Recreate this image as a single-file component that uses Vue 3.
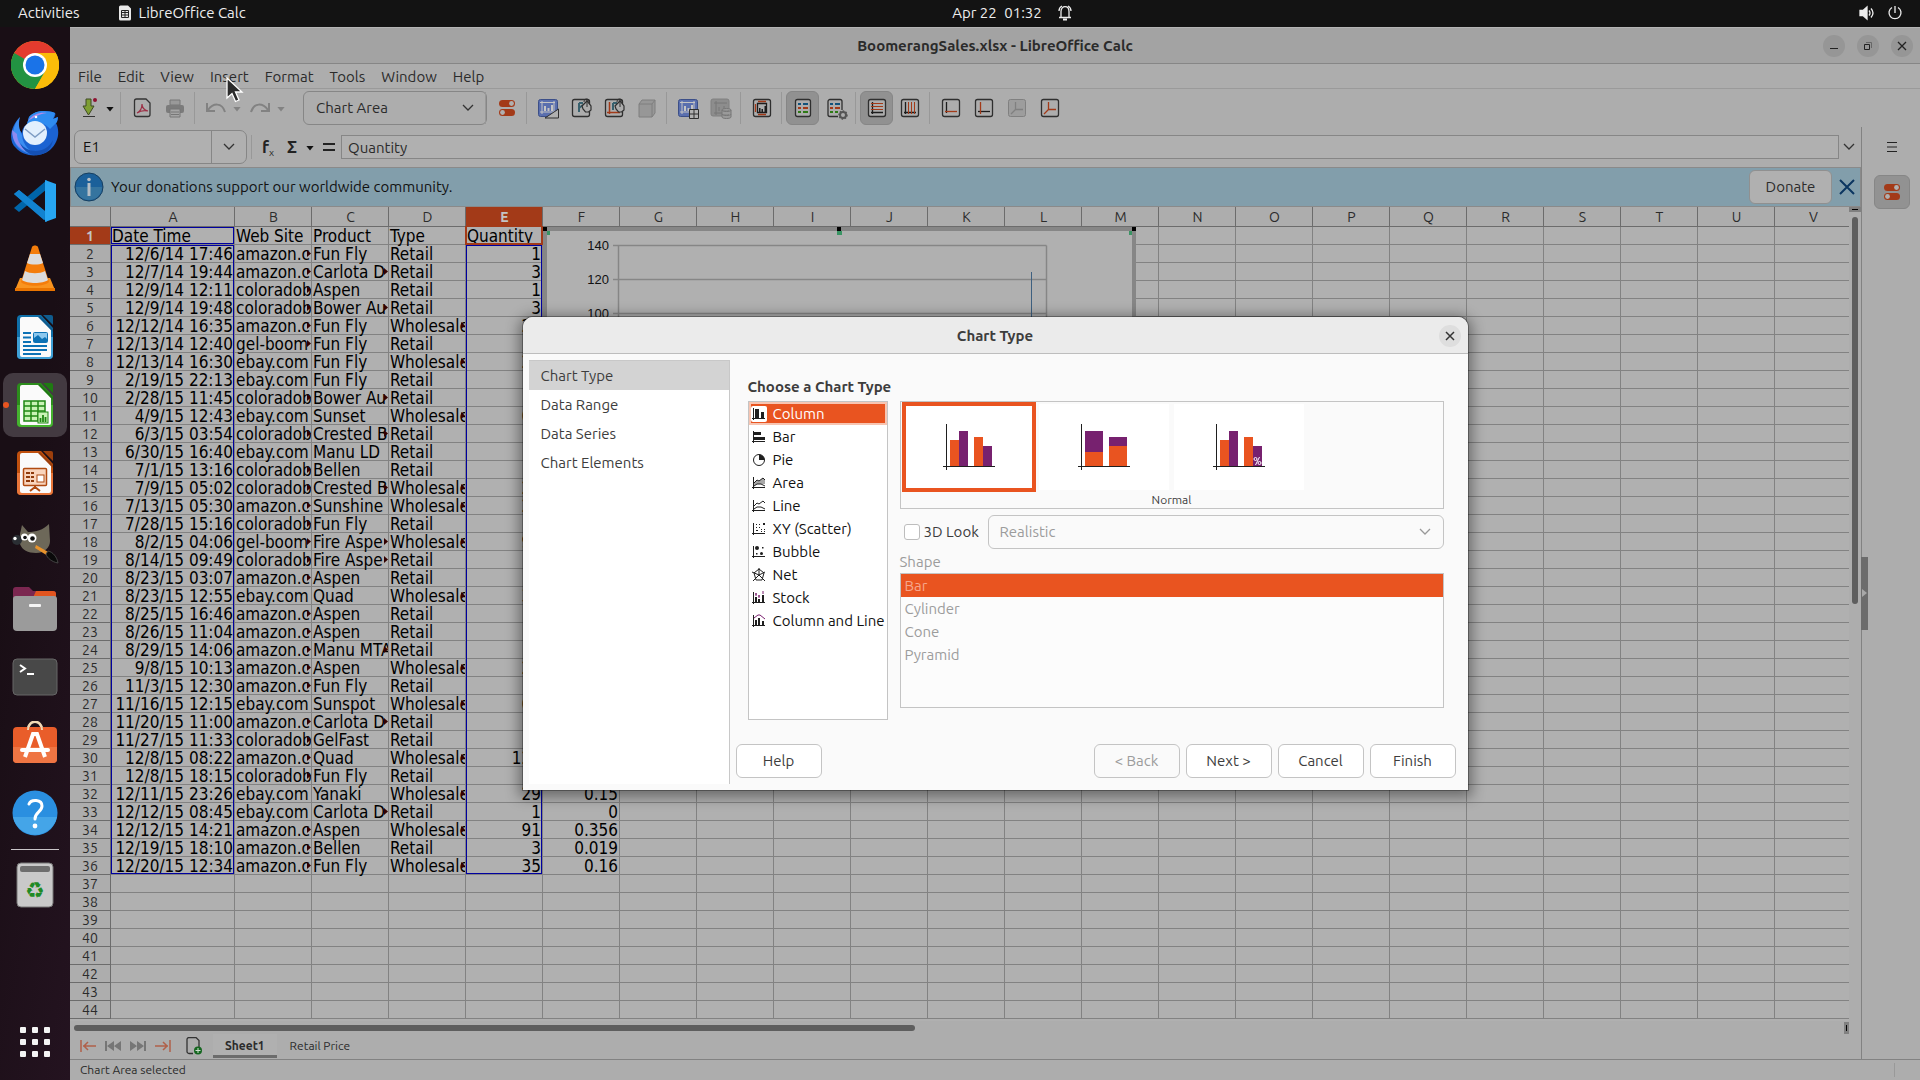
<script setup>
const columns = 'ABCDEFGHIJKLMNOPQRSTUV'.split('')

const records = [
  ['12/6/14 17:46', 'amazon.c', 'Fun Fly', 'Retail', '1', ''],
  ['12/7/14 19:44', 'amazon.c', 'Carlota D', 'Retail', '3', ''],
  ['12/9/14 12:11', 'coloradob', 'Aspen', 'Retail', '1', ''],
  ['12/9/14 19:48', 'coloradob', 'Bower Au', 'Retail', '3', ''],
  ['12/12/14 16:35', 'amazon.c', 'Fun Fly', 'Wholesale', '23', ''],
  ['12/13/14 12:40', 'gel-boom', 'Fun Fly', 'Retail', '1', ''],
  ['12/13/14 16:30', 'ebay.com', 'Fun Fly', 'Wholesale', '22', ''],
  ['2/19/15 22:13', 'ebay.com', 'Fun Fly', 'Retail', '2', ''],
  ['2/28/15 11:45', 'coloradob', 'Bower Au', 'Retail', '1', ''],
  ['4/9/15 12:43', 'ebay.com', 'Sunset', 'Wholesale', '60', ''],
  ['6/3/15 03:54', 'coloradob', 'Crested B', 'Retail', '1', ''],
  ['6/30/15 16:40', 'ebay.com', 'Manu LD', 'Retail', '2', ''],
  ['7/1/15 13:16', 'coloradob', 'Bellen', 'Retail', '1', ''],
  ['7/9/15 05:02', 'coloradob', 'Crested B', 'Wholesale', '21', ''],
  ['7/13/15 05:30', 'amazon.c', 'Sunshine', 'Wholesale', '25', ''],
  ['7/28/15 15:16', 'coloradob', 'Fun Fly', 'Retail', '2', ''],
  ['8/2/15 04:06', 'gel-boom', 'Fire Aspe', 'Wholesale', '92', ''],
  ['8/14/15 09:49', 'coloradob', 'Fire Aspe', 'Retail', '1', ''],
  ['8/23/15 03:07', 'amazon.c', 'Aspen', 'Retail', '1', ''],
  ['8/23/15 12:55', 'ebay.com', 'Quad', 'Wholesale', '31', ''],
  ['8/25/15 16:46', 'amazon.c', 'Aspen', 'Retail', '2', ''],
  ['8/26/15 11:04', 'amazon.c', 'Aspen', 'Retail', '1', ''],
  ['8/29/15 14:06', 'amazon.c', 'Manu MTA', 'Retail', '1', ''],
  ['9/8/15 10:13', 'amazon.c', 'Aspen', 'Wholesale', '20', ''],
  ['11/3/15 12:30', 'amazon.c', 'Fun Fly', 'Retail', '2', ''],
  ['11/16/15 12:15', 'ebay.com', 'Sunspot', 'Wholesale', '63', ''],
  ['11/20/15 11:00', 'amazon.c', 'Carlota D', 'Retail', '1', ''],
  ['11/27/15 11:33', 'coloradob', 'GelFast', 'Retail', '3', ''],
  ['12/8/15 08:22', 'amazon.c', 'Quad', 'Wholesale', '124', ''],
  ['12/8/15 18:15', 'coloradob', 'Fun Fly', 'Retail', '1', ''],
  ['12/11/15 23:26', 'ebay.com', 'Yanaki', 'Wholesale', '29', '0.15'],
  ['12/12/15 08:45', 'ebay.com', 'Carlota D', 'Retail', '1', '0'],
  ['12/12/15 14:21', 'amazon.c', 'Aspen', 'Wholesale', '91', '0.356'],
  ['12/19/15 18:10', 'amazon.c', 'Bellen', 'Retail', '3', '0.019'],
  ['12/20/15 12:34', 'amazon.c', 'Fun Fly', 'Wholesale', '35', '0.16'],
]
const clipped = ['amazon.c', 'coloradob', 'gel-boom', 'Carlota D', 'Bower Au', 'Crested B', 'Fire Aspe', 'Manu MTA', 'Wholesale']
const numeric = [0, 4, 5]
const rows = [['Date Time', 'Web Site', 'Product', 'Type', 'Quantity', ''], ...records]
while (rows.length < 44) rows.push([])

const menus = ['File', 'Edit', 'View', 'Insert', 'Format', 'Tools', 'Window', 'Help']

const frame = '<rect x="3.500" y="3.500" width="17" height="17" rx="2" fill="none" stroke="#2f2f2f" stroke-width="1.300"/>'
const bucket = '<path d="M13 10l5-5 4 5v4l-2.500 2h-3L14 13z" fill="#adadad" stroke="#2f2f2f" stroke-width="1.200"/><path d="M18 3v8M15 6c0-4 5-4 5 0" fill="none" stroke="#2f2f2f"/>'
const miniChart = '<path d="M6 5v13M4 16h15M4 6.500h15M18 5v13" stroke="#c4c4c4" fill="none"/><path d="M8 10h2v5H8zM11.500 12h2v3h-2zM15 9h2v6h-2z" fill="#c4c4c4"/>'
const icons = {
  toggles: '<rect x="4" y="4" width="16" height="7" rx="3.500" fill="#a33a18"/><circle cx="16.500" cy="7.500" r="2.400" fill="#b0b0b0"/><rect x="4" y="13" width="16" height="7" rx="3.500" fill="#a33a18"/><circle cx="7.500" cy="16.500" r="2.400" fill="#b0b0b0"/>',
  chartType: '<rect x="2.500" y="3.500" width="19" height="17" rx="2" fill="#5a6fae" stroke="#3c4f88"/>' + miniChart + '<path d="M9 22l13.500-9v9z" fill="#b0b0b0" stroke="#2f2f2f"/>',
  chartArea: frame + '<path d="M10 7v9M10 7h4M10 12l4-3" stroke="#38616e" stroke-width="2" fill="none"/>' + bucket,
  chartWall: frame + '<path d="M7.500 6v12M5 16.500h13" stroke="#a33a18" stroke-width="1.500" fill="none"/><path d="M11 7v7M11 7h4" stroke="#38616e" stroke-width="2" fill="none"/>' + bucket,
  cube: '<path d="M4 8l3-4h13v13l-3 4H4z" fill="#979797" stroke="#7f7f7f"/><path d="M4 8h13v13M17 8l3-4" fill="none" stroke="#7f7f7f"/>',
  dataTable: '<rect x="2.500" y="3.500" width="19" height="17" rx="2" fill="#5a6fae" stroke="#3c4f88"/>' + miniChart + '<path d="M13.500 13.500h9v9h-9zM18 13.500v9M13.500 18h9" fill="#b0b0b0" stroke="#2f2f2f"/>',
  dataRange: '<rect x="2" y="3" width="18" height="17" rx="2" fill="#8d8d8d" stroke="#808080"/><path d="M7 5v14M5 17h9M5 7h13M10 11v4M15 10v3" stroke="#777" fill="none"/><path d="M13 14c0-2 9-2 9 0v7c0 2-9 2-9 0zM13 14c0 2 9 2 9 0M13 18c0 2 9 2 9 0" fill="#9a9a9a" stroke="#777"/>',
  titles: frame + '<path d="M8 5.500h8M8 18.500h8M5.500 8v8" stroke="#a33a18" stroke-width="1.300"/><path d="M7.500 7.500h9v9h-9z" fill="none" stroke="#1d1d1d" stroke-width="1.300"/><path d="M9 12h1.500v4H9zM11.500 13H13v3h-1.500zM14.500 10h1.500v6h-1.500z" fill="#1d1d1d"/>',
  legend: '<rect x="4.500" y="3.500" width="15" height="17" rx="2" fill="#adadad" stroke="#2f2f2f" stroke-width="1.300"/><g stroke-width="2"><path d="M7 8h3M12 8h5" stroke="#11527c"/><path d="M7 12h3M12 12h5" stroke="#a33a18"/><path d="M7 16h3M12 16h5" stroke="#2f7a16"/></g>',
  legendGear: '<path d="M14 20.500H6a2 2 0 0 1-2-2v-13a2 2 0 0 1 2-2h10a2 2 0 0 1 2 2V14" fill="none" stroke="#2f2f2f" stroke-width="1.300"/><g stroke-width="2"><path d="M6 8h3M11 8h5" stroke="#11527c"/><path d="M6 12h3M11 12h5" stroke="#a33a18"/><path d="M6 16h3M11 16h3" stroke="#2f7a16"/></g><circle cx="19" cy="19" r="3" fill="#adadad" stroke="#555" stroke-width="2"/><circle cx="19" cy="19" r="4" fill="none" stroke="#555" stroke-width="1.500" stroke-dasharray="1.500 1.500"/>',
  gridH: '<rect x="4" y="4" width="16" height="16" rx="2" fill="#adadad"/>' + frame + '<path d="M7.500 6v12M6 16.500h12" stroke="#1d1d1d" stroke-width="1.300"/><path d="M6 7.500h12M6 10.500h12M6 13.500h12" stroke="#a33a18"/>',
  gridV: frame + '<path d="M7.500 6v12M6 16.500h12" stroke="#1d1d1d" stroke-width="1.300"/><path d="M10.500 6v12M13.500 6v12M16.500 6v12" stroke="#a33a18"/>',
  axisX: frame + '<path d="M7.500 6v11" stroke="#1d1d1d" stroke-width="1.300"/><path d="M6 15.500h12" stroke="#a33a18" stroke-width="1.300"/>',
  axisY: frame + '<path d="M6 15.500h12" stroke="#1d1d1d" stroke-width="1.300"/><path d="M8.500 6v12" stroke="#a33a18" stroke-width="1.300"/>',
  axisZ: '<rect x="3.500" y="3.500" width="17" height="17" rx="2" fill="#9d9d9d" stroke="#808080"/><path d="M10.500 6v7.500H18M10.500 13.500L6 18" fill="none" stroke="#808080" stroke-width="1.300"/>',
  axisAll: frame + '<path d="M10.500 6v7.500H18M10.500 13.500L6 18" fill="none" stroke="#a33a18" stroke-width="1.300"/>',
}
const chartTools = [
  { id: 'chartType', label: 'Chart Type' }, { id: 'chartArea', label: 'Chart Area' }, { id: 'chartWall', label: 'Chart Wall' }, { id: 'cube', label: '3D View' }, null,
  { id: 'dataTable', label: 'Data Table' }, { id: 'dataRange', label: 'Data Ranges' }, null,
  { id: 'titles', label: 'Titles' }, null,
  { id: 'legend', label: 'Legend On/Off', on: true }, { id: 'legendGear', label: 'Legend' }, null,
  { id: 'gridH', label: 'Horizontal Grids', on: true }, { id: 'gridV', label: 'Vertical Grids' }, null,
  { id: 'axisX', label: 'X Axis' }, { id: 'axisY', label: 'Y Axis' }, { id: 'axisZ', label: 'Z Axis' }, { id: 'axisAll', label: 'All Axes' },
]

const officeDoc = (dark, mid, light, inner) =>
  `<path d="M10 2h20l12 13v27a4 4 0 0 1-4 4H10a4 4 0 0 1-4-4V6a4 4 0 0 1 4-4z" fill="${mid}"/><path d="M6 24h36v18a4 4 0 0 1-4 4H10a4 4 0 0 1-4-4z" fill="${light}"/><path d="M11 4h17l12 13v25a2 2 0 0 1-2 2H11a2 2 0 0 1-2-2V6a2 2 0 0 1 2-2z" fill="#fafafa"/><path d="M32 2h8a2 2 0 0 1 2 2v8z" fill="${dark}"/><path d="M29 3l13 13v3L27 4z" fill="${dark}"/>${inner}`
const dock = [
  { label: 'Google Chrome', art: '<circle cx="24" cy="24" r="24" fill="#fbbc09"/><path d="M3.200 12A24 24 0 0 1 44.800 12H24L13.600 30z" fill="#e33b2e"/><path d="M3.200 12A24 24 0 0 0 24 48L34.400 30 24 24z" fill="#229342"/><path d="M44.800 12A24 24 0 0 1 24 48L34.400 30 34 12z" fill="#fbbc09"/><circle cx="24" cy="24" r="12" fill="#fff"/><circle cx="24" cy="24" r="9.500" fill="#1a73e8"/>' },
  { label: 'Thunderbird', art: '<path d="M9 8C-1 18-3 32 5 39c8 9 24 10 34 2 9-8 10-19 6-27 2-3 2-5 2-6l-5 2c2-2 3-5 2-6C36 1 24 1 18 8l-2 7c-4 3-5 6-5 9-4-4-5-10-2-16z" fill="#1b63d2"/><path d="M44 4C36 1 24 1 18 8l-2 7c9-4 18-1 23 5l7-7 1-5-5 2z" fill="#2f8cf0"/><path d="M9 8C2 16 0 26 4 34c5 9 14 12 24 11-9-2-16-8-17-19-3-6-4-11-2-18z" fill="#3b8df2"/><path d="M1 21c0 11 6 19 16 22C10 38 6 32 6 25z" fill="#8e8af0"/><path d="M9 34c8 11 26 11 33-3-2 12-11 16-19 15-6-1-11-5-14-12z" fill="#1450b4"/><circle cx="24" cy="24" r="12" fill="#e2effd"/><path d="M14 20l10 8 10-8" fill="none" stroke="#7f9dc4" stroke-width="1.500"/><path d="M17 12c5-7 12-9 19-8-9 1-14 5-19 8z" fill="#b48ae8"/><circle cx="25" cy="8" r="1.300" fill="#fff"/>' },
  { label: 'Visual Studio Code', art: '<path d="M3 17l5-4 28 23v9z" fill="#0b7dc6"/><path d="M3 31l5 4L36 12V3z" fill="#0065a9"/><path d="M3 17l5-4 26 21-1 9z" fill="#1283d0"/><path d="M34 3l11 4v34l-11 4z" fill="#27a6f2"/>' },
  { label: 'VLC', art: '<path d="M9 33h30l5 12H4z" fill="#f9941f"/><path d="M4 43h40v3H4z" fill="#e97400"/><path d="M21 2c1-2 5-2 6 0l11 35c-5 5-23 5-28 0z" fill="#f47d0b"/><path d="M19 9h10l3 9c-4 2-12 2-16 0zM14 26c5 3 15 3 20 0l3 9c-5 4-21 4-26 0z" fill="#dcdcdc"/>' },
  { label: 'LibreOffice Writer', art: officeDoc('#0f5c8e', '#0f6fa8', '#3fa0d6', '<path d="M12 20h8M12 24.500h8M12 29h8M12 33h24M12 37h24M12 41h18" stroke="#0d72b5" stroke-width="2"/><rect x="22.500" y="19.500" width="14" height="10" rx="1" fill="#8cc8ee" stroke="#0d72b5"/><path d="M23 29v-4l4-3 4 4 3-2 2 2v3z" fill="#0d72b5"/>') },
  { label: 'LibreOffice Calc', active: true, art: officeDoc('#1f7a12', '#2c8c1c', '#45b32f', '<path d="M13 20h21v20H13zM13 25h21M13 30h21M13 35h21M20 20v20M27 20v20" fill="#c9f3b6" stroke="#1f8614" stroke-width="1.500"/><rect x="27" y="31" width="10" height="11" fill="#c9f3b6" stroke="#1f8614"/><path d="M29.500 41v-4M32 41v-7M34.500 41v-5" stroke="#1f8614" stroke-width="1.800"/>') },
  { label: 'LibreOffice Impress', art: officeDoc('#9c3f0c', '#c0500e', '#e8763a', '<rect x="12.500" y="19.500" width="23" height="17" rx="1" fill="#f9d5bd" stroke="#b04a10" stroke-width="1.500"/><path d="M15 24h4M15 28h4M15 32h4" stroke="#8e3a0b" stroke-width="2"/><path d="M20 24h3M20 28h3M20 32h3" stroke="#8e3a0b" stroke-width="2"/><rect x="26" y="26" width="7" height="7" fill="#fff" stroke="#b04a10"/><path d="M24 37v2M24 38l-5 4M24 38l5 4" stroke="#b04a10" stroke-width="2"/>') },
  { label: 'GIMP', art: '<path d="M9 17l2-9 6 7c8 0 15-2 21-8l1 17c0 6-5 12-14 12-8 0-14-3-16-9z" fill="#6d6859"/><circle cx="6" cy="23" r="5" fill="#2a2e33"/><circle cx="4" cy="21.500" r="1.700" fill="#fff"/><circle cx="13.500" cy="20" r="3.500" fill="#fff"/><circle cx="21" cy="21" r="4.500" fill="#fff"/><circle cx="14" cy="20.500" r="1.800" fill="#111"/><circle cx="21.500" cy="21.500" r="2.300" fill="#111"/><path d="M25 28l14 8-2 3-13-8z" fill="#e8932c"/><path d="M37 34c5 1 9 6 10 12-6-1-11-5-12-9z" fill="#0a0a0a" stroke="#444"/>' },
  { label: 'Files', art: '<path d="M2 10V5a3 3 0 0 1 3-3h13l4 4h20a3 3 0 0 1 3 3v8H2z" fill="#7b2750"/><path d="M25 6h17a3 3 0 0 1 3 3v8H20z" fill="#e2551f"/><path d="M2 14a3 3 0 0 1 3-3h38a3 3 0 0 1 3 3v28a4 4 0 0 1-4 4H6a4 4 0 0 1-4-4z" fill="#9b9b9b"/><rect x="18" y="19" width="12" height="3" rx="1" fill="#f4f4f4"/>' },
  { label: 'Terminal', art: '<rect x="2" y="6" width="44" height="36" rx="4" fill="#484848" stroke="#666"/><path d="M9 12l5 3.500-5 3.500M16 21h7" fill="none" stroke="#fff" stroke-width="2"/>' },
  { label: 'Ubuntu Software', art: '<path d="M17 9c0-11 14-11 14 0" fill="none" stroke="#f0d9b5" stroke-width="2.500"/><rect x="2" y="6" width="44" height="36" rx="4" fill="#e95d2a"/><path d="M2 26h44v12a4 4 0 0 1-4 4H6a4 4 0 0 1-4-4z" fill="#ef7543"/><path d="M17 9c0-3 1-5 2-6M31 9c0-3-1-5-2-6" fill="none" stroke="#f0d9b5" stroke-width="2"/><path d="M14 36l8-23h4l8 23" fill="none" stroke="#fff" stroke-width="4"/><path d="M11 29h26" stroke="#fff" stroke-width="4" stroke-linecap="round"/>' },
  { label: 'Help', art: '<circle cx="24" cy="24" r="22.500" fill="#2a8fe0"/><path d="M2 28a22.500 22.500 0 0 0 44 0z" fill="#44a5e8"/><path d="M18 15c2-5 13-5 13 2 0 6-7 6-7 13" fill="none" stroke="#fff" stroke-width="3" stroke-linecap="round"/><circle cx="24" cy="37" r="2.400" fill="#fff"/>' },
]

const typeIcons = {
  Column: '<path d="M2.500 2v12M1 12.500h13" stroke="#1f1f1f"/><path d="M4 3h4v9H4zM10 6h3v6h-3z" fill="#1f1f1f"/>',
  Bar: '<path d="M2.500 2v12M1 12.500h13" stroke="#1f1f1f"/><path d="M3 3h7v3H3zM3 8h11v3H3z" fill="#1f1f1f"/>',
  Pie: '<circle cx="8" cy="8" r="5.500" fill="none" stroke="#1f1f1f"/><path d="M8 8V2.500A5.500 5.500 0 0 1 13.500 8z" fill="#1f1f1f"/>',
  Area: '<path d="M3 8l3-3 2 1 4-3 2 2v4l-4 0H6l-3 2z" fill="#a8a8a8"/><path d="M2.500 2v12M1 12.500h13M3 8l3-3 2 1 4-3 2 2M3 11l3-2h4l4 2" stroke="#1f1f1f" fill="none"/>',
  Line: '<path d="M2.500 2v12M1 12.500h13M3 8l3-3 2 1 4-3 2 2M3 11l3-2h4l4 2" stroke="#1f1f1f" fill="none"/>',
  'XY (Scatter)': '<path d="M2.500 2v12M1 12.500h13" stroke="#1f1f1f"/><path d="M5 3h1v1H5zM8 3h1v1H8zM5 6h1v1H5zM12 2h2v2h-2zM8 6h1v1H8zM5 9h2v1H5zM10 8h1v1h-1zM13 8h1v1h-1zM10 10h1v1h-1zM13 10h1v1h-1z" fill="#1f1f1f"/>',
  Bubble: '<path d="M2.500 2v12M1 12.500h13" stroke="#1f1f1f"/><circle cx="6" cy="4" r="2" fill="#1f1f1f"/><circle cx="10.500" cy="9.500" r="1.500" fill="#1f1f1f"/><path d="M11 3h1.500v1.500H11zM5 9h1.500v1.500H5z" fill="#1f1f1f"/>',
  Net: '<path d="M8 1v7l-6 6M8 8l6 6M1 5l7 3 6-3M8 2l5 4-2 7H5L3 6z" stroke="#1f1f1f" fill="none"/>',
  Stock: '<path d="M2.500 2v12M1 12.500h13" stroke="#1f1f1f"/><path d="M4 7h2v5H4zM7 9h2v3H7zM11 5h2v7h-2z" fill="#1f1f1f"/><path d="M5 3v3M8 5v3M12 1v3M4 4h2M7 6h2" stroke="#7a1f6e"/>',
  'Column and Line': '<path d="M2.500 2v12M1 12.500h13" stroke="#1f1f1f"/><path d="M4 7h2v5H4zM7 5h2v7H7zM11 8h2v4h-2z" fill="#1f1f1f"/><path d="M3 5l4-3h2l5 4" stroke="#7a1f6e" fill="none"/>',
}
const chartTypes = Object.keys(typeIcons)
const axes = '<path d="M3.500 0v46M0 42.500h52" stroke="#1f1f1f"/>'
const variants = [
  { label: 'Normal', art: '<path d="M7 16h9v26H7zM31 13h9v29h-9z" fill="#e95420"/><path d="M16 7h9v35h-9zM40 22h9v20h-9z" fill="#77216f"/>' + axes },
  { label: 'Stacked', art: '<path d="M7 28h18v14H7zM31 22h18v20H31z" fill="#e95420"/><path d="M7 7h18v21H7zM31 13h18v9H31z" fill="#77216f"/>' + axes },
  { label: 'Percent Stacked', art: '<path d="M7 16h9v26H7zM31 13h9v29h-9z" fill="#e95420"/><path d="M16 7h9v35h-9zM40 22h9v20h-9z" fill="#77216f"/><g fill="none" stroke="#fff"><circle cx="42.500" cy="35" r="1.500"/><circle cx="46.500" cy="39" r="1.500"/><path d="M46.500 33l-4 8"/></g>' + axes },
]
const shapes = ['Bar', 'Cylinder', 'Cone', 'Pyramid']
</script>

<template>
  <div class="desktop">
    <header class="topbar">
      <div class="topbar-left">
        <button class="plain">Activities</button>
        <button class="plain app-name">
          <svg width="14" height="16" viewBox="0 0 14 16"><path d="M1 2a1.500 1.500 0 0 1 1.500-1.500H10l3 3V14a1.500 1.500 0 0 1-1.500 1.500h-9A1.500 1.500 0 0 1 1 14z" fill="#e8e8e8" /><path d="M3.500 5.500h7v7h-7zM3.500 7.500h7M3.500 10h7M7 5.500v7" stroke="#222" fill="none" /></svg>
          LibreOffice Calc
        </button>
      </div>
      <div class="topbar-center">
        <span>Apr 22&ensp;01:32</span>
        <svg width="14" height="16" viewBox="0 0 14 16" fill="none" stroke="#eee" stroke-width="1.300"><path d="M1 12.500h12M3 12V6.500C3 0 11 0 11 6.500V12M1 6c0-2 1-4 3-5M13 6c0-2-1-4-3-5" /><path d="M5 14.500h4" stroke-width="2" /></svg>
      </div>
      <div class="topbar-right">
        <svg width="16" height="16" viewBox="0 0 16 16" fill="none" stroke="#eee" stroke-width="1.300"><path d="M1 5.500h3L8 2v12L4 10.500H1z" fill="#eee" /><path d="M10 5.500q2 2.500 0 5M12 3.500q4 4.500 0 9" /></svg>
        <svg width="16" height="16" viewBox="0 0 16 16" fill="none" stroke="#eee" stroke-width="1.300"><path d="M8 1v7M5 2.500a6 6 0 1 0 6 0" /></svg>
      </div>
    </header>

    <div class="body">
      <nav class="dock">
        <button v-for="d in dock" :key="d.label" class="dock-item" :class="{ active: d.active }" :aria-label="d.label">
          <svg width="48" height="48" viewBox="0 0 48 48" v-html="d.art" />
        </button>
        <hr />
        <button class="dock-item" aria-label="Trash">
          <svg width="48" height="48" viewBox="0 0 48 48"><rect x="6" y="1" width="36" height="44" rx="4" fill="#c9c9c9" stroke="#777" /><rect x="9" y="4" width="30" height="6" rx="2" fill="#6e6e6e" /><text class="recycle" x="24" y="36" text-anchor="middle" fill="#1f8a24">♻</text></svg>
        </button>
        <button class="dock-item apps" aria-label="Show Applications">
          <svg width="32" height="32" viewBox="0 0 32 32" fill="#f4f4f4"><template v-for="y in 3" :key="y"><rect v-for="x in 3" :key="x" :x="x * 12 - 11" :y="y * 12 - 11" width="6" height="6" rx="1" /></template></svg>
        </button>
      </nav>

      <main class="window">
        <div class="titlebar">
          <h1>BoomerangSales.xlsx - LibreOffice Calc</h1>
          <div class="window-buttons">
            <button aria-label="Minimize"><svg width="12" height="12" viewBox="0 0 12 12"><path d="M2 8.500h8" stroke="#222" /></svg></button>
            <button aria-label="Restore"><svg width="12" height="12" viewBox="0 0 12 12" fill="none"><path d="M4 2.500h5.500V8" stroke="#666" /><path d="M2.500 4.500h5v5h-5z" stroke="#222" /></svg></button>
            <button aria-label="Close"><svg width="12" height="12" viewBox="0 0 12 12"><path d="M2 2l8 8M10 2l-8 8" stroke="#222" stroke-width="1.300" /></svg></button>
          </div>
        </div>

        <nav class="menubar"><button v-for="m in menus" :key="m" class="plain">{{ m }}</button></nav>

        <div class="toolbar">
          <button class="tool save" aria-label="Save"><svg width="24" height="24" viewBox="0 0 24 24"><path d="M9 3h5v7h3l-5.500 9L6 10h3z" fill="#7f9f34" stroke="#3f4a22" /><path d="M6 20.500h12" stroke="#333" /><circle cx="18" cy="4" r="2" fill="#8e1030" /></svg></button>
          <span class="tri"></span><i class="sep"></i>
          <button class="tool" aria-label="Export as PDF"><svg width="24" height="24" viewBox="0 0 24 24" fill="none"><path d="M4.500 5a2 2 0 0 1 2-2H16l4 4v11.500a2 2 0 0 1-2 2H6.500a2 2 0 0 1-2-2z" stroke="#333" stroke-width="1.300" /><path d="M7 17c4-2 5-6 5-9 0 4 2 6 6 7-4-1-8 0-11 2z" stroke="#9c2f45" stroke-width="1.200" /></svg></button>
          <button class="tool" aria-label="Print"><svg width="24" height="24" viewBox="0 0 24 24"><path d="M7 4h10v5H7z" fill="#999" stroke="#777" /><rect x="3" y="9" width="18" height="8" rx="2" fill="#7b7b7b" /><path d="M7 13h10v8H7zM8 16h8M8 18.500h8" fill="#a5a5a5" stroke="#777" /></svg></button>
          <i class="sep"></i>
          <button class="tool" aria-label="Undo"><svg width="24" height="24" viewBox="0 0 24 24" fill="none" stroke="#828282" stroke-width="2"><path d="M3 7v8h8M4 14C9 7 18 6 21 16" /></svg></button>
          <span class="tri dim"></span>
          <button class="tool" aria-label="Redo"><svg width="24" height="24" viewBox="0 0 24 24" fill="none" stroke="#828282" stroke-width="2"><path d="M21 7v8h-8M20 14C15 7 6 6 3 16" /></svg></button>
          <span class="tri dim"></span>
          <select class="element-select" aria-label="Chart element"><option>Chart Area</option></select>
          <i class="sep"></i>
          <button class="tool" aria-label="Format Selection"><svg width="24" height="24" viewBox="0 0 24 24" v-html="icons.toggles" /></button>
          <i class="sep"></i>
          <template v-for="(t, i) in chartTools" :key="i">
            <button v-if="t" class="tool" :class="{ on: t.on }" :aria-label="t.label"><svg width="24" height="24" viewBox="0 0 24 24" v-html="icons[t.id]" /></button>
            <i v-else class="sep"></i>
          </template>
        </div>

        <div class="work">
          <div class="document">
            <div class="formula-bar">
              <div class="name-box"><input aria-label="Name Box" value="E1" /><button aria-label="Name list"><svg width="12" height="8" viewBox="0 0 12 8"><path d="M1 1l5 5 5-5" fill="none" stroke="#333" stroke-width="1.300" /></svg></button></div>
              <i class="sep"></i>
              <button class="fn" aria-label="Function Wizard"><b>f</b><sub>x</sub></button>
              <button class="fn" aria-label="Select Function"><b>Σ</b></button>
              <span class="tri"></span>
              <button class="fn" aria-label="Formula"><svg width="12" height="10" viewBox="0 0 12 10"><path d="M0 2h12M0 8h12" stroke="#222" stroke-width="2" /></svg></button>
              <input class="formula" aria-label="Formula input" value="Quantity" />
              <button class="fn expand" aria-label="Expand Formula Bar"><svg width="12" height="8" viewBox="0 0 12 8"><path d="M1 1l5 5 5-5" fill="none" stroke="#333" stroke-width="1.300" /></svg></button>
            </div>

            <div class="infobar">
              <svg width="30" height="30" viewBox="0 0 30 30"><circle cx="15" cy="15" r="14" fill="#1b609a" stroke="#173f60" /><path d="M2 15a13 13 0 0 0 26 0z" fill="#35749f" /><path d="M13.500 11h3v13h-3z" fill="#b5bec6" /><circle cx="15" cy="7.500" r="1.800" fill="#b5bec6" /></svg>
              <span>Your donations support our worldwide community.</span>
              <button class="donate">Donate</button>
              <button class="plain" aria-label="Close Infobar"><svg width="16" height="16" viewBox="0 0 16 16"><path d="M1 1l14 14M15 1L1 15" stroke="#0b3660" stroke-width="2" /></svg></button>
            </div>

            <div class="sheet-area">
              <div class="grid">
                <table>
                  <colgroup><col class="c-head" /><col class="c-date" /><col v-for="n in 21" :key="n" class="c-std" /></colgroup>
                  <thead><tr><th></th><th v-for="c in columns" :key="c" scope="col" :class="{ sel: c === 'E' }">{{ c }}</th></tr></thead>
                  <tbody>
                    <tr v-for="(r, i) in rows" :key="i">
                      <th scope="row" :class="{ sel: i === 0 }">{{ i + 1 }}</th>
                      <td v-for="(c, j) in columns" :key="c" :class="{ num: i > 0 && numeric.includes(j), cut: clipped.includes(r[j]) }">{{ r[j] }}</td>
                    </tr>
                  </tbody>
                </table>
                <div class="range date-title"></div>
                <div class="range date-values"></div>
                <div class="range qty-values"></div>
                <div class="cursor-cell"></div>
                <div class="chart">
                  <svg width="593" height="400" viewBox="0 0 593 400">
                    <rect x="2" y="2" width="589" height="396" fill="#b0b0b0" stroke="#868686" stroke-width="4" />
                    <path d="M70 18.500h433.500M70 52.500h433.500M70 86.500h433.500M75.500 18.500v300M503.500 18.500v300" fill="none" stroke="#868686" stroke-width="1.500" />
                    <path d="M488.500 45v300" stroke="#3e6080" />
                    <path d="M0 0h4v4H0zM294 0h4v4h-4zM589 0h4v4h-4z" fill="#000" />
                    <path d="M4 4h3v4H4zM294 4h5v4h-5zM586 4h3v4h-3z" fill="#3a9464" />
                    <g class="chart-label" text-anchor="end"><text x="66" y="23">140</text><text x="66" y="57">120</text><text x="66" y="91">100</text></g>
                  </svg>
                </div>
              </div>
              <div class="vscroll"><i class="split"></i><i class="thumb"></i></div>
            </div>

            <div class="hscroll"><i class="thumb"></i><i class="split"></i></div>

            <div class="tabs">
              <button class="tab-nav" aria-label="First sheet"><svg width="16" height="14" viewBox="0 0 16 14"><path d="M1 1v12M3 7h13M8 3L4 7l4 4" stroke="#b0604a" stroke-width="1.500" fill="none" /></svg></button>
              <button class="tab-nav" aria-label="Previous sheet"><svg width="16" height="14" viewBox="0 0 16 14" fill="#767676"><path d="M0 2h2v10H0zM9 2v10L2 7zM16 2v10L9 7z" /></svg></button>
              <button class="tab-nav" aria-label="Next sheet"><svg width="16" height="14" viewBox="0 0 16 14" fill="#767676"><path d="M14 2h2v10h-2zM0 2v10l7-5zM7 2v10l7-5z" /></svg></button>
              <button class="tab-nav" aria-label="Last sheet"><svg width="16" height="14" viewBox="0 0 16 14"><path d="M15 1v12M0 7h13M8 3l4 4-4 4" stroke="#b0604a" stroke-width="1.500" fill="none" /></svg></button>
              <button class="tab-nav add" aria-label="Add sheet"><svg width="16" height="18" viewBox="0 0 16 18"><path d="M7 16.500H3a2 2 0 0 1-2-2v-12a2 2 0 0 1 2-2h7l3 3V10" fill="none" stroke="#333" stroke-width="1.300" /><circle cx="12" cy="13.500" r="4" fill="#14661f" /><path d="M12 11v5M9.500 13.500h5" stroke="#cfe0cf" /></svg></button>
              <button class="tab current">Sheet1</button>
              <button class="tab">Retail Price</button>
            </div>
          </div>

          <aside class="sidebar">
            <button class="plain" aria-label="Sidebar Settings"><svg width="10" height="10" viewBox="0 0 10 10"><path d="M0 .5h10M0 5h10M0 9.500h10" stroke="#222" /></svg></button>
            <button class="deck" aria-label="Properties"><svg width="24" height="24" viewBox="0 0 24 24" v-html="icons.toggles" /></button>
            <div class="handle"></div>
          </aside>
        </div>

        <footer class="status"><span>Chart Area selected</span><i></i></footer>
      </main>
    </div>

    <svg class="pointer" width="18" height="26" viewBox="0 0 18 26"><path d="M1 1v20l5-4.500 3.500 8 3.500-1.500-3.500-8H16z" fill="#2b2b2b" stroke="#fff" stroke-width="1.300" /></svg>

    <div class="modal-layer">
      <section class="dialog" role="dialog" aria-labelledby="dialog-title">
        <header class="dialog-head">
          <h2 id="dialog-title">Chart Type</h2>
          <button aria-label="Close"><svg width="10" height="10" viewBox="0 0 10 10"><path d="M1 1l8 8M9 1L1 9" stroke="#333" stroke-width="1.500" /></svg></button>
        </header>
        <div class="dialog-body">
          <nav class="steps">
            <button v-for="(s, i) in ['Chart Type', 'Data Range', 'Data Series', 'Chart Elements']" :key="s" :class="{ current: i === 0 }">{{ s }}</button>
          </nav>
          <div class="page">
            <h3>Choose a Chart Type</h3>
            <div class="choices">
              <ul class="types">
                <li v-for="(t, i) in chartTypes" :key="t" :class="{ selected: i === 0 }">
                  <svg width="16" height="16" viewBox="0 0 16 16" v-html="typeIcons[t]" />{{ t }}
                </li>
              </ul>
              <div class="options">
                <div class="variants">
                  <div class="thumbs">
                    <button v-for="(v, i) in variants" :key="v.label" :aria-label="v.label" :class="{ selected: i === 0 }"><svg width="52" height="46" viewBox="0 0 52 46" v-html="v.art" /></button>
                  </div>
                  <p>Normal</p>
                </div>
                <div class="look">
                  <input id="look3d" type="checkbox" /><label for="look3d">3D Look</label>
                  <select disabled aria-label="Scheme"><option>Realistic</option></select>
                </div>
                <p class="shape-label">Shape</p>
                <ul class="shapes"><li v-for="(s, i) in shapes" :key="s" :class="{ selected: i === 0 }">{{ s }}</li></ul>
              </div>
            </div>
            <div class="actions">
              <button class="help">Help</button>
              <button disabled>&lt; Back</button>
              <button>Next &gt;</button>
              <button>Cancel</button>
              <button>Finish</button>
            </div>
          </div>
        </div>
      </section>
    </div>
  </div>
</template>

<style>
body { background: #adadad; overflow: hidden; }
</style>

<style scoped>
* { box-sizing: border-box; }
.desktop { position: relative; display: flex; flex-direction: column; min-height: 100vh; overflow: hidden; font-family: Ubuntu, "Noto Sans", sans-serif; font-size: 15px; line-height: 20px; color: #2b2b2b; }
button, input, select { font: inherit; color: inherit; margin: 0; }
button { padding: 0; border: 0; background: none; display: flex; align-items: center; justify-content: center; white-space: nowrap; }
svg { display: block; flex: none; }
h1, h2, h3, p, ul { margin: 0; padding: 0; font-size: inherit; list-style: none; }
.sep { flex: none; width: 1px; height: 32px; background: #989898; margin: 0 4px 0 3px; }

.topbar { display: grid; grid-template-columns: 1fr auto 1fr; align-items: center; height: 27px; padding: 0 17px 1px 18px; background: #131313; color: #eee; }
.topbar-left, .topbar-center, .topbar-right { display: flex; align-items: center; white-space: nowrap; }
.topbar-left { gap: 38px; }
.app-name { gap: 7px; }
.topbar-center { gap: 16px; padding-left: 103px; }
.topbar-right { justify-content: flex-end; gap: 12px; }

.body { display: flex; flex: 1; }
.dock { display: flex; flex-direction: column; align-items: center; gap: 4px; width: 70px; padding: 6px 3px; background: linear-gradient(100deg, #190e15 40%, #241320); }
.dock-item { width: 64px; height: 64px; border-radius: 10px; position: relative; }
.dock-item.active { background: #433a41; }
.dock-item.active::before { content: ""; position: absolute; left: 0; width: 6px; height: 6px; border-radius: 3px; background: #e95420; }
.dock hr { width: 48px; height: 1px; margin: 0; border: 0; background: #c9c5c8; }
.dock .apps { margin-top: auto; }
.recycle { font-family: "DejaVu Sans", sans-serif; font-size: 22px; }

.window { display: flex; flex-direction: column; flex: 1; min-width: 0; background: #adadad; }
.titlebar { position: relative; display: flex; align-items: center; justify-content: center; height: 37px; background: #a3a3a3; border-bottom: 1px solid #868686; border-top: 1px solid #b4b4b4; }
.titlebar h1 { font-weight: bold; }
.window-buttons { position: absolute; right: 7px; display: flex; gap: 12px; }
.window-buttons button { width: 22px; height: 22px; border-radius: 11px; background: #969696; }
.menubar { display: flex; gap: 16px; height: 25px; padding: 1px 8px 0; border-bottom: 1px solid #9a9a9a; }
.toolbar { display: flex; align-items: center; height: 38px; padding-left: 3px; }
.tool { width: 33px; height: 34px; border-radius: 6px; }
.tool.save { width: 32px; }
.tool.on { background: #919191; border: 1px solid #868686; }
.tri { flex: none; width: 8px; height: 5px; margin: 2px 3px 0 1px; background: #111; clip-path: polygon(0 0, 100% 0, 50% 100%); }
.tri.dim { background: #828282; margin-right: 2px; }
select { appearance: none; border-radius: 6px; background: no-repeat right 12px center url("data:image/svg+xml,%3Csvg xmlns='http://www.w3.org/2000/svg' width='12' height='8'%3E%3Cpath d='M1 1l5 5 5-5' fill='none' stroke='%23333' stroke-width='1.300'/%3E%3C/svg%3E"); }
.element-select { width: 184px; height: 34px; margin-left: 16px; margin-right: -5px; padding: 0 12px; border: 1px solid #868686; }

.work { display: flex; flex: 1; }
.document { display: flex; flex-direction: column; flex: 1; min-width: 0; }
.formula-bar { display: flex; align-items: center; height: 40px; padding-left: 4px; }
.name-box { display: flex; width: 173px; height: 34px; margin-right: 1px; border: 1px solid #868686; border-radius: 7px; background: #b0b0b0; }
.name-box input { flex: 1; min-width: 0; padding: 0 8px; border: 0; background: none; color: #111; }
.name-box button { width: 35px; border-left: 1px solid #868686; }
.formula-bar .sep { height: 24px; }
.fn { width: 24px; height: 24px; font-size: 17px; color: #222; }
.fn sub { font-size: 10px; align-self: flex-end; line-height: 12px; }
.formula-bar .tri { margin-left: 2px; }
.formula { flex: 1; height: 24px; padding: 0 6px; border: 1px solid #868686; background: #b0b0b0; }
.formula-bar .expand { width: 22px; padding-right: 3px; }
.infobar { display: flex; align-items: center; height: 40px; padding: 0 5px 0 3px; gap: 7px; border: 1px solid #8a8a8a; background: #829eab; color: #111; }
.donate { width: 83px; height: 34px; margin-left: auto; border: 1px solid #909090; border-radius: 6px; background: #b0b0b0; color: #2b2b2b; }

.sheet-area { display: flex; }
.grid { position: relative; flex: 1; min-width: 0; height: 814px; overflow: hidden; background: #b0b0b0; }
table { width: 1782px; table-layout: fixed; border-collapse: separate; border-spacing: 0; }
.c-head { width: 41px; } .c-date { width: 124px; } .c-std { width: 77px; }
th, td { height: 18px; padding: 0; white-space: nowrap; border-right: 1px solid #828282; border-bottom: 1px solid #828282; line-height: 17px; }
th { font-size: 14px; font-weight: normal; background: #adadad; border-color: #6c6c6c; }
tbody th { padding-top: 1px; line-height: 16px; }
thead th { height: 20px; padding: 1px 0 0 1px; line-height: 18px; }
th.sel { background: #a33a18; color: #c4c4c4; font-weight: bold; }
td { position: relative; padding: 1px 1px 0; overflow-x: clip; overflow-y: visible; font-family: "DejaVu Sans Condensed", "DejaVu Sans", sans-serif; font-size: 17px; line-height: 16px; color: #000; }
td.num { text-align: right; }
td.cut::after { content: ""; position: absolute; right: 0; top: 5px; width: 4px; height: 7px; background: #300; clip-path: polygon(0 0, 100% 50%, 0 100%); }
.range, .cursor-cell, .chart { position: absolute; }
.range { border: 1px solid #0000a0; }
.date-title { left: 41px; top: 20px; width: 123px; height: 17px; }
.date-values { left: 41px; top: 38px; width: 123px; height: 629px; }
.qty-values { left: 396px; top: 38px; width: 76px; height: 629px; }
.cursor-cell { left: 395px; top: 19px; width: 78px; height: 19px; border: 2px solid #a33a18; border-top-width: 1px; }
.chart { left: 473px; top: 20px; }
.chart-label { font-family: "Liberation Sans", sans-serif; font-size: 13px; fill: #111; }
.vscroll { display: flex; flex-direction: column; align-items: center; width: 12px; }
.vscroll .split { width: 12px; height: 5px; background: linear-gradient(#000, #000) center / 6px 1px no-repeat #808080; }
.vscroll .thumb { width: 6px; height: 387px; margin-top: 5px; border-radius: 3px; background: #5e5e5e; }
.hscroll { display: grid; grid-template-columns: 9fr 10fr; align-items: center; height: 13px; padding: 0 12px 0 4px; }
.hscroll .thumb { height: 6px; border-radius: 3px; background: #5e5e5e; }
.hscroll .split { justify-self: end; width: 5px; height: 12px; background: linear-gradient(#000, #000) center / 1px 6px no-repeat #808080; }
.tabs { display: flex; height: 24px; padding-left: 5px; }
.tab-nav { width: 25px; }
.tab-nav.add { width: 38px; }
.tab { padding: 0 13px; font-size: 12px; }
.tab.current { padding: 3px 12px 0; border-bottom: 3px solid #6c6c6c; background: #b0b0b0; font-weight: bold; }

.sidebar { position: relative; display: flex; flex-direction: column; align-items: center; width: 59px; padding-left: 1px; border-left: 1px solid #828282; }
.sidebar .plain { width: 36px; height: 40px; }
.deck { width: 36px; height: 34px; margin-top: 8px; border: 1px solid #868686; border-radius: 6px; background: #929292; }
.handle { position: absolute; left: -1px; top: 430px; width: 7px; height: 73px; background: #6c6c6c; }
.handle::after { content: ""; position: absolute; left: 1px; top: 32px; width: 5px; height: 8px; background: #a8a8a8; clip-path: polygon(0 0, 100% 50%, 0 100%); }
.status { display: flex; align-items: center; justify-content: space-between; height: 21px; padding: 0 25px 0 10px; border-top: 1px solid #828282; font-size: 12px; }
.status i { width: 1px; height: 14px; background: #999; }

.pointer { position: absolute; left: 226px; top: 77px; }
.modal-layer { position: absolute; inset: 317px 0 auto 70px; display: flex; justify-content: center; }
.dialog { display: flex; flex-direction: column; width: 945px; height: 473px; border-radius: 10px 10px 0 0; background: #fafafa; color: #3d3d3d; box-shadow: 0 0 0 1px rgba(0, 0, 0, .3), 0 3px 14px 4px rgba(0, 0, 0, .4); }
.dialog-head { position: relative; display: flex; align-items: center; justify-content: center; height: 37px; flex: none; padding-top: 1px; border-bottom: 1px solid #bdbdbd; border-radius: 10px 10px 0 0; background: #ebebeb; }
.dialog-head button { position: absolute; right: 7px; width: 22px; height: 22px; border-radius: 11px; background: #dedede; }
.dialog-body { display: flex; flex: 1; padding: 6px 0 6px 6px; }
.steps { width: 201px; border: solid #c8c8c8; border-width: 1px 1px 0 0; background: #fff; }
.steps button { width: 100%; height: 29px; padding-left: 12px; justify-content: flex-start; }
.steps .current { background: #d3d3d3; }
.page { display: flex; flex-direction: column; flex: 1; padding: 16px 12px 0 6px; }
.page h3 { padding-left: 12px; height: 25px; line-height: 22px; }
.choices { display: flex; gap: 12px; padding: 0 12px; }
.types { flex: none; width: 140px; height: 319px; border: 1px solid #c4c4c4; background: #fff; color: #111; }
.types li { display: flex; align-items: center; gap: 6px; height: 23px; padding-left: 2px; white-space: nowrap; }
.types .selected { padding-left: 0; border: 2px solid #f7c5b2; background: #e95420; color: #fff; }
.types .selected svg { background: #fff; border-radius: 2px; }
.options { flex: 1; }
.variants { height: 108px; border: 1px solid #c4c4c4; }
.thumbs { display: flex; gap: 1px; padding-left: 1px; }
.thumbs button { width: 134px; height: 90px; border: 2px solid #fafafa; background: #fff; }
.thumbs .selected { border: 4px solid #e95420; }
.variants p { text-align: center; font-size: 12px; line-height: 16px; }
.look { display: flex; align-items: center; height: 46px; padding-left: 4px; }
.look input { appearance: none; width: 16px; height: 16px; border: 1px solid #bdbdbd; border-radius: 3px; background: #fff; }
.look label { width: 68px; padding-left: 4px; white-space: nowrap; }
.look select { flex: 1; height: 34px; padding: 0 11px; border: 1px solid #c4c4c4; color: #9c9c9c; opacity: 1; background-image: url("data:image/svg+xml,%3Csvg xmlns='http://www.w3.org/2000/svg' width='12' height='8'%3E%3Cpath d='M1 1l5 5 5-5' fill='none' stroke='%23999' stroke-width='1.300'/%3E%3C/svg%3E"); }
.shape-label { height: 18px; line-height: 14px; color: #9c9c9c; }
.shapes { height: 135px; border: 1px solid #c4c4c4; background: #fcfcfc; color: #9c9c9c; }
.shapes li { height: 23px; padding-left: 4px; line-height: 23px; }
.shapes .selected { background: #e95420; color: #f6a78c; }
.actions { display: flex; gap: 6px; margin-top: auto; padding-bottom: 6px; }
.actions button { width: 86px; height: 34px; border: 1px solid #c4c4c4; border-radius: 6px; background: #fff; }
.actions button:disabled { background: #fafafa; color: #9c9c9c; }
.actions .help { margin-right: auto; }
</style>
